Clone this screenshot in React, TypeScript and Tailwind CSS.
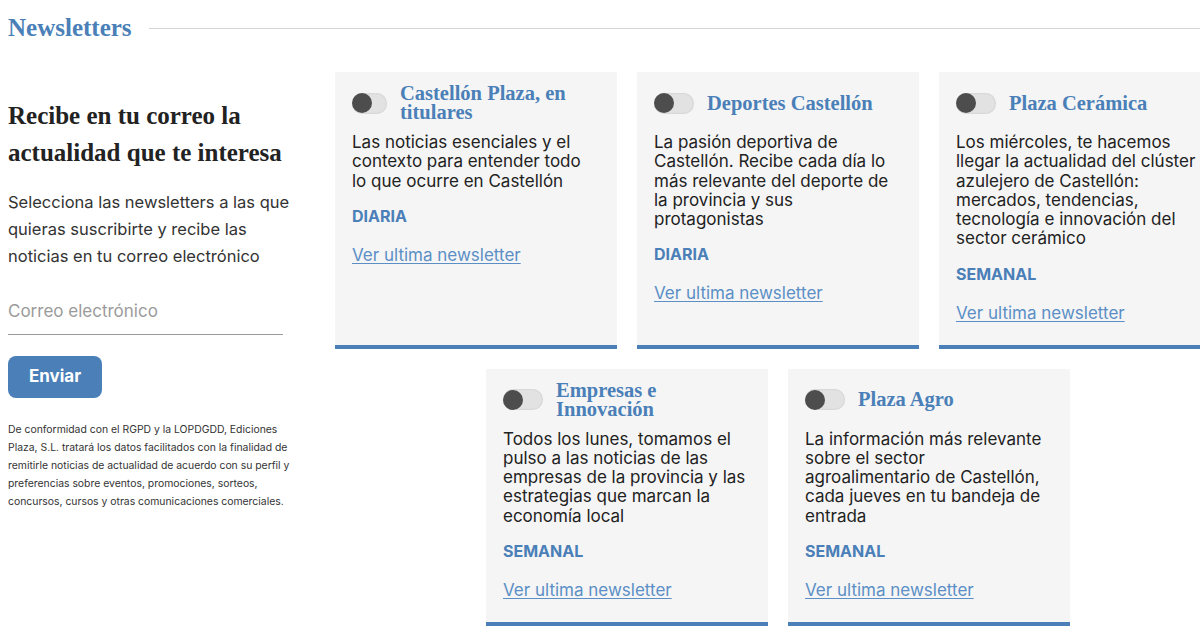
import React from "react";

const serif = "font-['Liberation_Serif',serif]";
const sans = "font-['Inter',sans-serif]";

type Item = {
  title: string;
  desc: string;
  freq: string;
  narrow?: boolean;
};

const row1: Item[] = [
  {
    title: "Castellón Plaza, en\ntitulares",
    desc: "Las noticias esenciales y el\ncontexto para entender todo\nlo que ocurre en Castellón",
    freq: "DIARIA",
    narrow: true,
  },
  {
    title: "Deportes Castellón",
    desc: "La pasión deportiva de\nCastellón. Recibe cada día lo\nmás relevante del deporte de\nla provincia y sus\nprotagonistas",
    freq: "DIARIA",
  },
  {
    title: "Plaza Cerámica",
    desc: "Los miércoles, te hacemos\nllegar la actualidad del clúster\nazulejero de Castellón:\nmercados, tendencias,\ntecnología e innovación del\nsector cerámico",
    freq: "SEMANAL",
  },
];

const row2: Item[] = [
  {
    title: "Empresas e\nInnovación",
    desc: "Todos los lunes, tomamos el\npulso a las noticias de las\nempresas de la provincia y las\nestrategias que marcan la\neconomía local",
    freq: "SEMANAL",
  },
  {
    title: "Plaza Agro",
    desc: "La información más relevante\nsobre el sector\nagroalimentario de Castellón,\ncada jueves en tu bandeja de\nentrada",
    freq: "SEMANAL",
  },
];

const Toggle = ({ narrow }: { narrow?: boolean }) => (
  <div
    className={`${narrow ? "w-[35px]" : "w-[40px]"} h-[21px] shrink-0 rounded-full bg-[#e2e2e2] shadow-[inset_0_0_2px_rgba(0,0,0,0.15)] flex items-center`}
  >
    <div className="size-[20px] rounded-full bg-[#4d4d4d]" />
  </div>
);

const Card = ({ item }: { item: Item }) => {
  return (
    <div className="w-[282px] bg-[#f5f5f5] border-b-[4px] border-[#4a7fb8] pt-[12px] px-[17px] pb-[22px]">
      {/* HEADER */}
      <div className="flex items-center gap-[13px] h-[38px]">
        <Toggle narrow={item.narrow} />
        <h3
          className={`${serif} font-bold text-[20.5px] leading-[19px] text-[#4a7fb8] whitespace-pre-line`}
        >
          {item.title}
        </h3>
      </div>
      {/* DESC */}
      <p
        className={`${sans} mt-[11px] text-[17px] leading-[19.25px] text-[#222] whitespace-pre-line`}
      >
        {item.desc}
      </p>
      <div className={`${sans} mt-[15px] text-[16px] leading-5 font-bold text-[#4a7fb8]`}>
        {item.freq}
      </div>
      <a
        href="#"
        className={`${sans} block mt-[19px] text-[17px] leading-5 text-[#5b8fc6] underline underline-offset-2`}
      >
        Ver ultima newsletter
      </a>
    </div>
  );
};

export default function App() {
  return (
    <div className="w-[1200px] h-[641px] overflow-hidden bg-white">
      <div className="w-[1221px]">
        {/* TITLE */}
        <div className="flex items-center gap-[17px] pl-2 pt-[14px]">
          <h2 className={`${serif} font-bold text-[25px] leading-7 text-[#4a7fb8]`}>
            Newsletters
          </h2>
          <div className="flex-1 h-px bg-[#d4d4d4]" />
        </div>

        <div className="flex mt-[30px]">
          {/* LEFT */}
          <div className="w-[285px] ml-2 shrink-0 pt-[25px]">
            <h1 className={`${serif} font-bold text-[25px] leading-[37px] text-[#222]`}>
              Recibe en tu correo la
              <br />
              actualidad que te interesa
            </h1>
            <p className={`${sans} mt-[18px] text-[16.5px] leading-[27px] text-[#333] whitespace-pre-line`}>
              {"Selecciona las newsletters a las que\nquieras suscribirte y recibe las\nnoticias en tu correo electrónico"}
            </p>
            <input
              type="email"
              placeholder="Correo electrónico"
              className={`${sans} mt-[17px] w-[275px] h-[48px] border-b border-[#9a9a9a] bg-transparent text-[17px] text-[#333] placeholder:text-[#9b9b9b] outline-none`}
            />
            <button
              className={`${sans} mt-[21px] w-[94px] h-[42px] rounded-lg bg-[#4a7fb8] text-white font-bold text-[17px]`}
            >
              Enviar
            </button>
            <p className={`${sans} mt-[23px] text-[10.4px] leading-[18px] text-[#333] whitespace-pre-line`}>
              {"De conformidad con el RGPD y la LOPDGDD, Ediciones\nPlaza, S.L. tratará los datos facilitados con la finalidad de\nremitirle noticias de actualidad de acuerdo con su perfil y\npreferencias sobre eventos, promociones, sorteos,\nconcursos, cursos y otras comunicaciones comerciales."}
            </p>
          </div>

          {/* CARDS */}
          <div className="ml-[42px] w-[886px] shrink-0 flex flex-col gap-5">
            <div className="flex gap-5 justify-center">
              {row1.map((item) => (
                <Card key={item.title} item={item} />
              ))}
            </div>
            <div className="flex gap-5 justify-center">
              {row2.map((item) => (
                <Card key={item.title} item={item} />
              ))}
            </div>
          </div>
        </div>
      </div>
    </div>
  );
}
